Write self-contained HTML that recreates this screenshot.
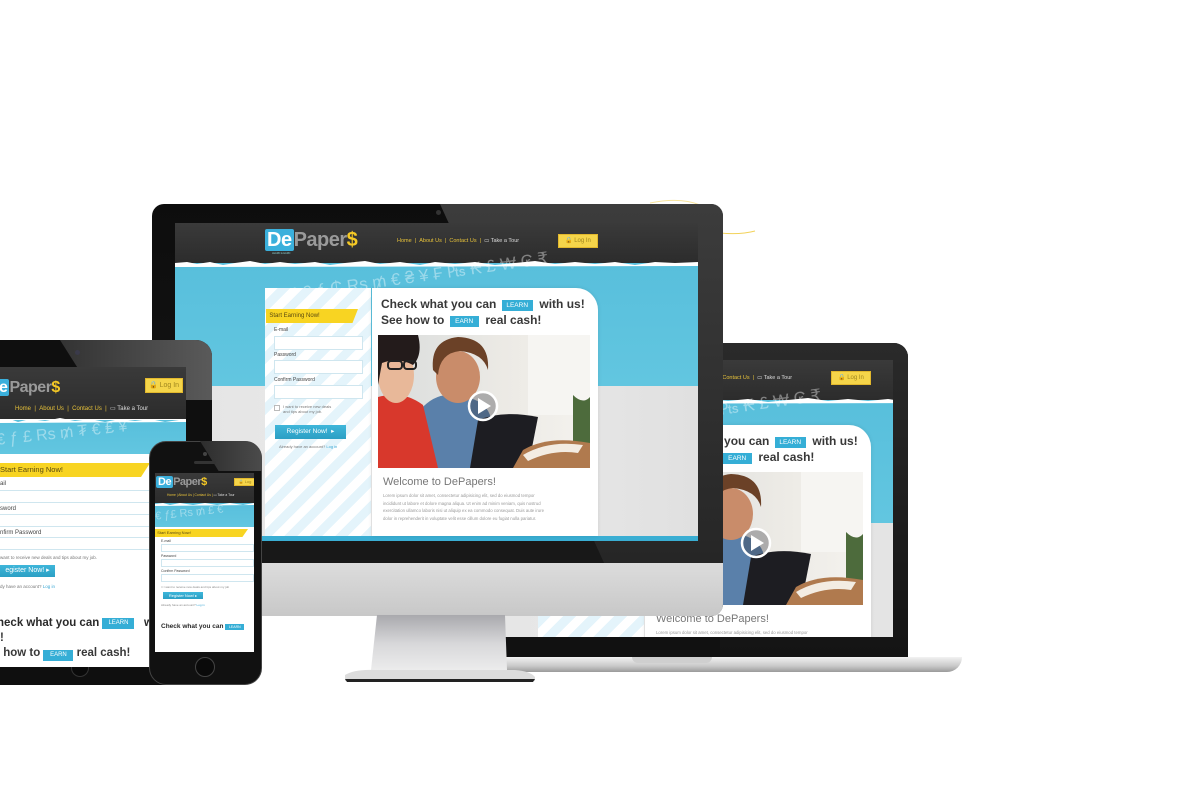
<!DOCTYPE html>
<html><head><meta charset="utf-8"><style>
*{margin:0;padding:0;box-sizing:border-box}
body{width:1200px;height:800px;background:#fff;position:relative;overflow:hidden;font-family:"Liberation Sans",sans-serif}
.a{position:absolute}
.site{position:absolute;left:0;top:0;width:523px;height:318px;overflow:hidden}
.hd{background:linear-gradient(#3a3a3a,#2c2c2c)}
.blue{background:linear-gradient(180deg,#58bfdc,#62c6e0)}
.logo{font-weight:bold;font-size:20px;line-height:20px;letter-spacing:-0.5px}
.logo .de{background:#3bb0dc;color:#fff;padding:0 2px;border-radius:2px}
.logo .p{color:#9a9a9a}
.logo .s{color:#f5c925}
.nav{color:#e7c23a;font-size:5.5px;white-space:nowrap}
.nav b{color:#ddd;font-weight:normal}
.btny{background:#f5d54a;color:#a0861f;font-size:6px;text-align:center;border:1px solid #e2b82d}
.stripes{background:repeating-linear-gradient(135deg,#fff 0 9px,#e4f4fb 9px 18px)}
.tab{background:#f8d422;color:#5a4a10;font-size:6px;clip-path:polygon(0 0,100% 0,94% 100%,0 100%)}
.lbl{font-size:5px;color:#444}
.inp{background:#fff;border:1px solid #cfe6ef}
.reg{background:linear-gradient(#3fb6da,#2b9fc4);color:#fff;font-size:6.5px;text-align:center}
.h{font-weight:bold;color:#383838;white-space:nowrap}
.lb{background:#35aed6;color:#fff;font-weight:normal;text-align:center}
.lorem{font-size:4.3px;color:#999;line-height:7.5px}
.sym{color:rgba(255,255,255,.4);font-family:"Liberation Sans",sans-serif;white-space:nowrap}
</style></head><body>

<svg class="a" style="left:640px;top:195px" width="120" height="50"><path d="M10 8 Q40 2 60 10" stroke="#f2d25a" stroke-width="1" fill="none" opacity=".6"/><path d="M80 38 Q100 40 115 36" stroke="#f2d25a" stroke-width="1" fill="none"/></svg>

<!-- LAPTOP -->
<div class="a" style="left:505px;top:343px;width:403px;height:317px;background:#111;border-radius:0 14px 0 0"></div>
<div class="a" style="left:720px;top:343px;width:188px;height:314px;background:linear-gradient(#2a2a2a,#141414);border-radius:0 14px 0 0"></div>
<div class="a" style="left:505px;top:657px;width:457px;height:15px;background:linear-gradient(#f2f2f2,#c9c9c9 60%,#9a9a9a);border-radius:0 0 30px 10px"></div>
<div class="a" style="left:632px;top:657px;width:80px;height:6px;background:#cfcfcf;border-radius:0 0 6px 6px"></div>
<div class="a" style="left:505px;top:360px;width:388px;height:277px;overflow:hidden">
  <div id="lap" class="site" style="left:-6px;top:0px"></div>
</div>

<!-- MONITOR -->
<div class="a" style="left:152px;top:204px;width:571px;height:412px;background:linear-gradient(#0d0d0d,#1a1a1a);border-radius:12px"></div>
<div class="a" style="left:440px;top:204px;width:283px;height:359px;background:linear-gradient(180deg,#3c3c3c,#262626);border-radius:0 12px 0 0;clip-path:polygon(0 0,100% 0,100% 100%,58% 100%)"></div>
<div class="a" style="left:152px;top:563px;width:571px;height:53px;background:linear-gradient(#dcdcdc,#c8c8c8);border-radius:0 0 12px 12px"></div>
<div class="a" style="left:436px;top:210px;width:5px;height:5px;border-radius:50%;background:#333"></div>
<svg class="a" style="left:335px;top:615px" width="205" height="72">
 <defs><linearGradient id="st" x1="0" y1="0" x2="0" y2="1"><stop offset="0" stop-color="#a9a9ad"/><stop offset=".5" stop-color="#d8d8da"/><stop offset="1" stop-color="#eeeeee"/></linearGradient></defs>
 <path d="M42 0 L170 0 L172 55 L180 58 L40 58 L36 55 Z" fill="url(#st)"/>
 <path d="M10 60 Q20 54 40 55 L180 55 Q195 56 200 62 L200 66 L10 66 Z" fill="#dcdcdc"/>
 <path d="M10 64 L200 64 L198 67 L12 67 Z" fill="#222"/>
</svg>
<div class="a" style="left:175px;top:223px;width:523px;height:318px;overflow:hidden">
  <div id="mon" class="site"></div>
</div>

<!-- TABLET -->
<div class="a" style="left:-20px;top:340px;width:232px;height:345px;background:#0f0f0f;border-radius:16px"></div>
<div class="a" style="left:60px;top:340px;width:152px;height:60px;background:linear-gradient(90deg,#333,#5a5a5a);border-radius:0 16px 0 0;clip-path:polygon(0 0,100% 0,100% 100%,25% 100%)"></div>
<div class="a" style="left:75px;top:350px;width:5px;height:5px;border-radius:50%;background:#3a3a4a"></div>
<div class="a" style="left:71px;top:659px;width:18px;height:18px;border-radius:50%;border:1px solid #333;background:#0a0a0a"></div>
<div class="a" style="left:0;top:367px;width:186px;height:300px;overflow:hidden;background:#fff">
  <div class="a hd" style="left:0;top:0;width:186px;height:52px"></div>
  <div class="a logo" style="left:-14px;top:11px;font-size:16px"><span class="de">De</span><span class="p">Paper</span><span class="s">$</span></div>
  <div class="a btny" style="left:145px;top:11px;width:38px;height:15px;line-height:13px;font-size:7px">&#128274; Log In</div>
  <div class="a nav" style="left:15px;top:38px;font-size:6px">Home &nbsp;| &nbsp;About Us &nbsp;| &nbsp;Contact Us &nbsp;| &nbsp;<b>&#9645; Take a Tour</b></div>
  <div class="a blue" style="left:0;top:53px;width:186px;height:34px"></div>
  <svg class="a" style="left:0;top:49px" width="186" height="8"><path d="M0 4 L10 3 L18 6 L30 3 L45 5 L60 2 L75 5 L90 3 L105 6 L120 3 L135 5 L150 3 L165 6 L186 3 L186 6 L0 7Z" fill="#fff"/></svg>
  <div class="a sym" style="left:-4px;top:58px;font-size:16px;transform:rotate(-6deg)">€ ƒ £ Rs ₥ ₮ € ₤ ¥</div>
  <div class="a tab" style="left:0;top:96px;width:150px;height:14px;line-height:14px;font-size:7.5px">Start Earning Now!</div>
  <div class="a lbl" style="left:0;top:114px;font-size:6px">ail</div>
  <div class="a inp" style="left:-2px;top:123px;width:188px;height:13px"></div>
  <div class="a lbl" style="left:0;top:139px;font-size:6px">sword</div>
  <div class="a inp" style="left:-2px;top:147px;width:188px;height:13px"></div>
  <div class="a lbl" style="left:0;top:163px;font-size:6px">nfirm Password</div>
  <div class="a inp" style="left:-2px;top:170px;width:188px;height:13px"></div>
  <div class="a lbl" style="left:0;top:188px;font-size:4.5px;color:#777">want to receive new deals and tips about my job.</div>
  <div class="a reg" style="left:0;top:198px;width:55px;height:12px;line-height:12px;font-size:7px">egister Now! &#9656;</div>
  <div class="a lbl" style="left:0;top:217px;font-size:4.5px;color:#777">dy have an account? <span style="color:#3aa7d4">Log in</span></div>
  <div class="a h" style="left:-3px;top:250px;font-size:11.5px;color:#2a2a2a">heck what you can <span class="lb" style="display:inline-block;width:32px;font-size:6px;line-height:11px;vertical-align:2px">LEARN</span> &nbsp; wi</div>
  <div class="a h" style="left:0;top:265px;font-size:11.5px">!</div>
  <div class="a h" style="left:0;top:280px;font-size:11.5px">&nbsp;how to <span class="lb" style="display:inline-block;width:30px;font-size:6px;line-height:11px">EARN</span> real cash!</div>
</div>

<!-- PHONE -->
<div class="a" style="left:149px;top:441px;width:113px;height:244px;background:#111;border-radius:17px;border:1px solid #444"></div>
<div class="a" style="left:200px;top:441px;width:62px;height:30px;background:linear-gradient(90deg,#2d2d2d,#4b4b4b);border-radius:0 17px 0 0;clip-path:polygon(0 0,100% 0,100% 100%,30% 100%)"></div>
<div class="a" style="left:203px;top:452px;width:4px;height:4px;border-radius:50%;background:#444"></div>
<div class="a" style="left:194px;top:461px;width:22px;height:3px;border-radius:2px;background:#333"></div>
<div class="a" style="left:195px;top:657px;width:20px;height:20px;border-radius:50%;border:1px solid #444;background:#0a0a0a"></div>
<div class="a" style="left:155px;top:473px;width:99px;height:179px;overflow:hidden;background:#fff">
  <div class="a hd" style="left:0;top:0;width:99px;height:30px"></div>
  <div class="a logo" style="left:1px;top:3px;font-size:11px;line-height:12px"><span class="de">De</span><span class="p">Paper</span><span class="s">$</span></div>
  <div class="a btny" style="left:79px;top:5px;width:22px;height:8px;line-height:6px;font-size:4px">&#128274; Log</div>
  <div class="a nav" style="left:12px;top:20px;font-size:3.3px">Home | About Us | Contact Us | <b>&#9645; Take a Tour</b></div>
  <div class="a blue" style="left:0;top:30px;width:99px;height:24px"></div>
  <svg class="a" style="left:0;top:28px" width="99" height="6"><path d="M0 3 L8 2 L15 4 L25 2 L38 4 L50 2 L62 4 L75 2 L88 4 L99 2 L99 4 L0 5Z" fill="#fff"/></svg>
  <div class="a sym" style="left:0;top:34px;font-size:11px;transform:rotate(-6deg)">€ ƒ£ Rs ₥ £ €</div>
  <div class="a tab" style="left:0;top:56px;width:93px;height:8px;line-height:8px;font-size:4px">&nbsp; Start Earning Now!</div>
  <div class="a lbl" style="left:6px;top:66px;font-size:3.5px">E-mail</div>
  <div class="a inp" style="left:6px;top:71px;width:93px;height:8px"></div>
  <div class="a lbl" style="left:6px;top:81px;font-size:3.5px">Password</div>
  <div class="a inp" style="left:6px;top:86px;width:93px;height:8px"></div>
  <div class="a lbl" style="left:6px;top:96px;font-size:3.5px">Confirm Password</div>
  <div class="a inp" style="left:6px;top:101px;width:93px;height:8px"></div>
  <div class="a lbl" style="left:6px;top:112px;font-size:3px;color:#888">&#9633; I want to receive new deals and tips about my job</div>
  <div class="a reg" style="left:8px;top:119px;width:40px;height:7px;line-height:7px;font-size:4px">Register Now! &#9656;</div>
  <div class="a lbl" style="left:6px;top:130px;font-size:3px;color:#888">Already have an account? <span style="color:#3aa7d4">Log in</span></div>
  <div class="a h" style="left:6px;top:150px;font-size:6.5px;color:#2a2a2a">Check what you can <span class="lb" style="display:inline-block;width:19px;font-size:3.5px;line-height:6px">LEARN</span></div>
</div>

<script>
var s='<div class="a hd" style="left:0;top:0;width:523px;height:40px"></div>'+
'<div class="a logo" style="left:90px;top:7px"><span class="de">De</span><span class="p">Paper</span><span class="s">$</span></div>'+
'<div class="a" style="left:97px;top:29px;font-size:2.5px;color:#8cc">LEARN &amp; EARN</div>'+
'<div class="a nav" style="left:222px;top:15px">Home &nbsp;| &nbsp;About Us &nbsp;| &nbsp;Contact Us &nbsp;| &nbsp;<b>&#9645; Take a Tour</b></div>'+
'<div class="a btny" style="left:383px;top:11px;width:40px;height:14px;line-height:12px">&#128274; Log In</div>'+
'<div class="a blue" style="left:0;top:40px;width:523px;height:123px"></div>'+
'<svg class="a" style="left:0;top:34px" width="523" height="12"><path d="M0 6 L12 5 L22 7 L35 5 L48 8 L60 6 L75 4 L90 7 L105 5 L120 7 L140 5 L155 8 L170 6 L190 4 L205 7 L225 5 L245 8 L260 5 L280 7 L300 5 L320 8 L340 6 L360 4 L380 7 L400 5 L420 7 L440 5 L460 8 L480 5 L500 6 L523 5 L523 9 L0 10Z" fill="#fff"/></svg>'+
'<div class="a sym" style="left:110px;top:44px;font-size:17px;transform:rotate(-8deg)">₭ € ƒ ₵ Rs ₥ € ₴ ¥ ₣ ₧ ₭ £ ₩ ₢ ₹</div>'+
'<div class="a" style="left:0;top:163px;width:523px;height:150px;background:linear-gradient(90deg,#e4e4e4,#ececec 50%,#e0e0e0)"></div>'+
'<div class="a" style="left:0;top:313px;width:523px;height:5px;background:#3aaed3"></div>'+
'<div class="a stripes" style="left:90px;top:65px;width:106px;height:248px"></div>'+
'<div class="a tab" style="left:91px;top:86px;width:92px;height:14px;line-height:14px">&nbsp;&nbsp;Start Earning Now!</div>'+
'<div class="a lbl" style="left:99px;top:104px">E-mail</div><div class="a inp" style="left:99px;top:113px;width:89px;height:14px"></div>'+
'<div class="a lbl" style="left:99px;top:129px">Password</div><div class="a inp" style="left:99px;top:137px;width:89px;height:14px"></div>'+
'<div class="a lbl" style="left:99px;top:154px">Confirm Password</div><div class="a inp" style="left:99px;top:162px;width:89px;height:14px"></div>'+
'<div class="a" style="left:99px;top:182px;width:6px;height:6px;border:1px solid #bbb;background:#fff"></div>'+
'<div class="a lbl" style="left:108px;top:181px;font-size:4px;color:#777;line-height:5px">I want to receive new deals<br>and tips about my job.</div>'+
'<div class="a reg" style="left:100px;top:202px;width:71px;height:14px;line-height:14px">Register Now! &nbsp;&#9656;</div>'+
'<div class="a lbl" style="left:104px;top:221px;font-size:4px;color:#777">Already have an account? <span style="color:#3aa7d4">Log in</span></div>'+
'<div class="a" style="left:197px;top:65px;width:226px;height:248px;background:#fff;border-radius:0 22px 0 0;box-shadow:0 0 4px rgba(0,0,0,.1)"></div>'+
'<div class="a h" style="left:206px;top:74px;font-size:12px">Check what you can <span class="lb" style="display:inline-block;width:31px;font-size:6.5px;line-height:11px;vertical-align:1px;margin-left:2px">LEARN</span> &nbsp;with us!</div>'+
'<div class="a h" style="left:206px;top:90px;font-size:12px">See how to <span class="lb" style="display:inline-block;width:29px;font-size:6.5px;line-height:11px;vertical-align:1px;margin-left:2px">EARN</span> &nbsp;real cash!</div>'+
'<svg class="a" style="left:203px;top:112px" width="212" height="133" viewBox="0 0 212 133">'+
'<defs><linearGradient id="bg" x1="0" y1="0" x2="1" y2="0"><stop offset="0" stop-color="#d9dcdc"/><stop offset=".6" stop-color="#eceae5"/><stop offset="1" stop-color="#f4f2ee"/></linearGradient></defs>'+
'<rect width="212" height="133" fill="url(#bg)"/><rect x="150" y="0" width="62" height="80" fill="#f6f5f2"/>'+
'<path d="M195 60 Q205 70 212 62 L212 110 L195 108Z" fill="#4d6b3c"/>'+
'<path d="M39 133 L42 75 Q60 55 80 62 Q105 62 112 80 L112 133Z" fill="#5a80aa"/>'+
'<ellipse cx="80" cy="42" rx="22" ry="26" fill="#c98c6a"/>'+
'<path d="M55 35 Q52 5 80 2 Q112 3 110 35 Q105 18 82 16 Q62 18 60 40Z" fill="#6b4127"/>'+
'<path d="M0 133 L0 62 Q25 55 45 70 L60 133Z" fill="#d8382c"/>'+
'<ellipse cx="18" cy="40" rx="18" ry="28" fill="#e8b899"/>'+
'<path d="M0 50 L0 0 L40 0 Q45 20 35 30 Q20 22 4 28Z" fill="#231b1b"/>'+
'<rect x="10" y="26" width="14" height="8" rx="3" fill="none" stroke="#222" stroke-width="2"/><rect x="26" y="26" width="12" height="8" rx="3" fill="none" stroke="#222" stroke-width="2"/>'+
'<path d="M92 133 L100 85 Q125 75 160 82 L150 133Z" fill="#1d1d22"/>'+
'<path d="M135 133 L145 115 Q170 100 212 108 L212 133Z" fill="#b07a4e"/>'+
'<path d="M145 120 Q170 105 205 110 L200 118 Q175 114 150 126Z" fill="#f3ece2"/>'+
'<circle cx="105" cy="71" r="14" fill="rgba(60,60,70,.35)" stroke="#fff" stroke-width="2.5"/><path d="M100 63 L113 71 L100 79Z" fill="#fff"/>'+
'</svg>'+
'<div class="a" style="left:208px;top:253px;font-size:11px;color:#777">Welcome to DePapers!</div>'+
'<div class="a lorem" style="left:208px;top:269px">Lorem ipsum dolor sit amet, consectetur adipisicing elit, sed do eiusmod tempor<br>incididunt ut labore et dolore magna aliqua. Ut enim ad minim veniam, quis nostrud<br>exercitation ullamco laboris nisi ut aliquip ex ea commodo consequat. Duis aute irure<br>dolor in reprehenderit in voluptate velit esse cillum dolore eu fugiat nulla pariatur.</div>';
document.getElementById('mon').innerHTML=s;
var l=document.getElementById('lap');l.innerHTML=s;l.style.left='-57px';
</script>
</body></html>
